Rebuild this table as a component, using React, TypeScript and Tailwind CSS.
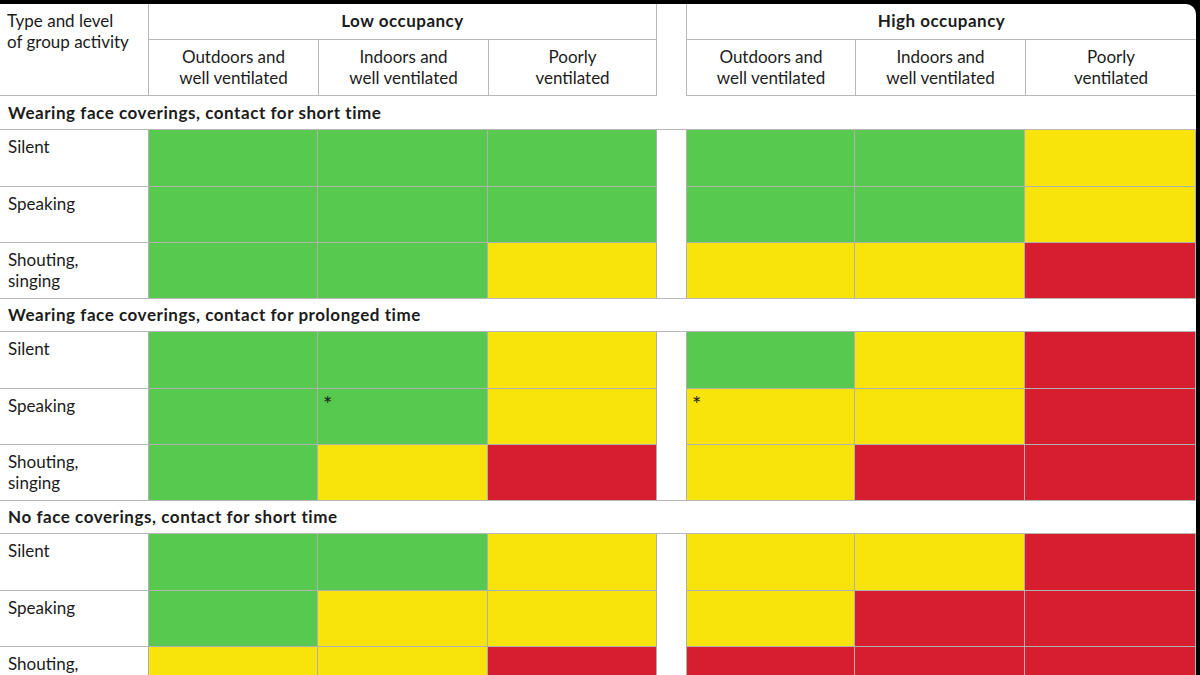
import React from 'react';

type C = 'g' | 'y' | 'r';

const fill: Record<C, string> = {
  g: 'bg-[#56c94e]',
  y: 'bg-[#f8e40b]',
  r: 'bg-[#d71e2e]',
};

const cols = 'grid grid-cols-[148px_170px_170px_169px_29px_169px_170px_171px]';

const sections: { title: string; rows: { label: string[]; cells: C[]; star?: number[] }[] }[] = [
  {
    title: 'Wearing face coverings, contact for short time',
    rows: [
      { label: ['Silent'], cells: ['g', 'g', 'g', 'g', 'g', 'y'] },
      { label: ['Speaking'], cells: ['g', 'g', 'g', 'g', 'g', 'y'] },
      { label: ['Shouting,', 'singing'], cells: ['g', 'g', 'y', 'y', 'y', 'r'] },
    ],
  },
  {
    title: 'Wearing face coverings, contact for prolonged time',
    rows: [
      { label: ['Silent'], cells: ['g', 'g', 'y', 'g', 'y', 'r'] },
      { label: ['Speaking'], cells: ['g', 'g', 'y', 'y', 'y', 'r'], star: [1, 3] },
      { label: ['Shouting,', 'singing'], cells: ['g', 'y', 'r', 'y', 'r', 'r'] },
    ],
  },
  {
    title: 'No face coverings, contact for short time',
    rows: [
      { label: ['Silent'], cells: ['g', 'g', 'y', 'y', 'y', 'r'] },
      { label: ['Speaking'], cells: ['g', 'y', 'y', 'y', 'r', 'r'] },
      { label: ['Shouting,', 'singing'], cells: ['y', 'y', 'r', 'r', 'r', 'r'] },
    ],
  },
];

const subheads = [
  ['Outdoors and', 'well ventilated'],
  ['Indoors and', 'well ventilated'],
  ['Poorly', 'ventilated'],
];

const Cell = ({ c, first, top, star }: { c: C; first: boolean; top: boolean; star: boolean }) => (
  <div
    className={`${fill[c]} h-[56px] border-r border-[#b0b0b0] ${first ? 'border-l' : ''} ${
      top ? 'border-t' : ''
    } pl-[5px] pt-[4px] text-[22px] leading-[22px]`}
  >
    {star ? '*' : ''}
  </div>
);

export default function App() {
  return (
    <div className="h-screen overflow-hidden bg-black">
      <div
        className="mt-[4px] w-[1196px] rounded-tr-[10px] bg-white text-[#1c1c1c]"
        style={{ fontFamily: 'Lato, "Open Sans", sans-serif' }}
      >
        {/* column headings */}
        <div className={`${cols} grid-rows-[36px_56px] text-[17px] leading-[21px]`}>
          <div className="row-span-2 border-b border-[#b8b8b8] pl-[7px] pt-[6px]">
            Type and level
            <br />
            of group activity
          </div>
          <div className="col-span-3 flex items-center justify-center border-x border-b border-[#b8b8b8] pb-[3px] font-bold tracking-[0.5px]">
            Low occupancy
          </div>
          <div className="row-span-2" />
          <div className="col-span-3 flex items-center justify-center border-l border-b border-[#b8b8b8] pb-[3px] font-bold tracking-[0.5px]">
            High occupancy
          </div>
          {[0, 1].map((g) =>
            subheads.map((s, i) => (
              <div
                key={`${g}-${i}`}
                className={`flex flex-col items-center justify-center border-b border-l border-[#b8b8b8] pb-[2px] text-center ${
                  g === 0 && i === 2 ? 'border-r' : ''
                }`}
              >
                <span>{s[0]}</span>
                <span>{s[1]}</span>
              </div>
            ))
          )}
        </div>

        {sections.map((sec, si) => (
          <div key={sec.title}>
            <div
              className={`flex h-[34px] items-center border-b border-[#b8b8b8] pl-[8px] text-[17px] font-bold tracking-[0.55px] ${
                si > 0 ? 'border-t' : ''
              }`}
            >
              {sec.title}
            </div>
            {sec.rows.map((row, ri) => (
              <div key={ri} className={cols}>
                <div
                  className={`h-[56px] pl-[8px] pt-[6px] text-[17px] leading-[21px] ${
                    ri > 0 ? 'border-t border-[#b8b8b8]' : ''
                  }`}
                >
                  {row.label.map((l) => (
                    <div key={l}>{l}</div>
                  ))}
                </div>
                {row.cells.slice(0, 3).map((c, i) => (
                  <Cell key={i} c={c} first={i === 0} top={ri > 0} star={!!row.star?.includes(i)} />
                ))}
                <div />
                {row.cells.slice(3).map((c, i) => (
                  <Cell key={i + 3} c={c} first={i === 0} top={ri > 0} star={!!row.star?.includes(i + 3)} />
                ))}
              </div>
            ))}
          </div>
        ))}
      </div>
    </div>
  );
}
